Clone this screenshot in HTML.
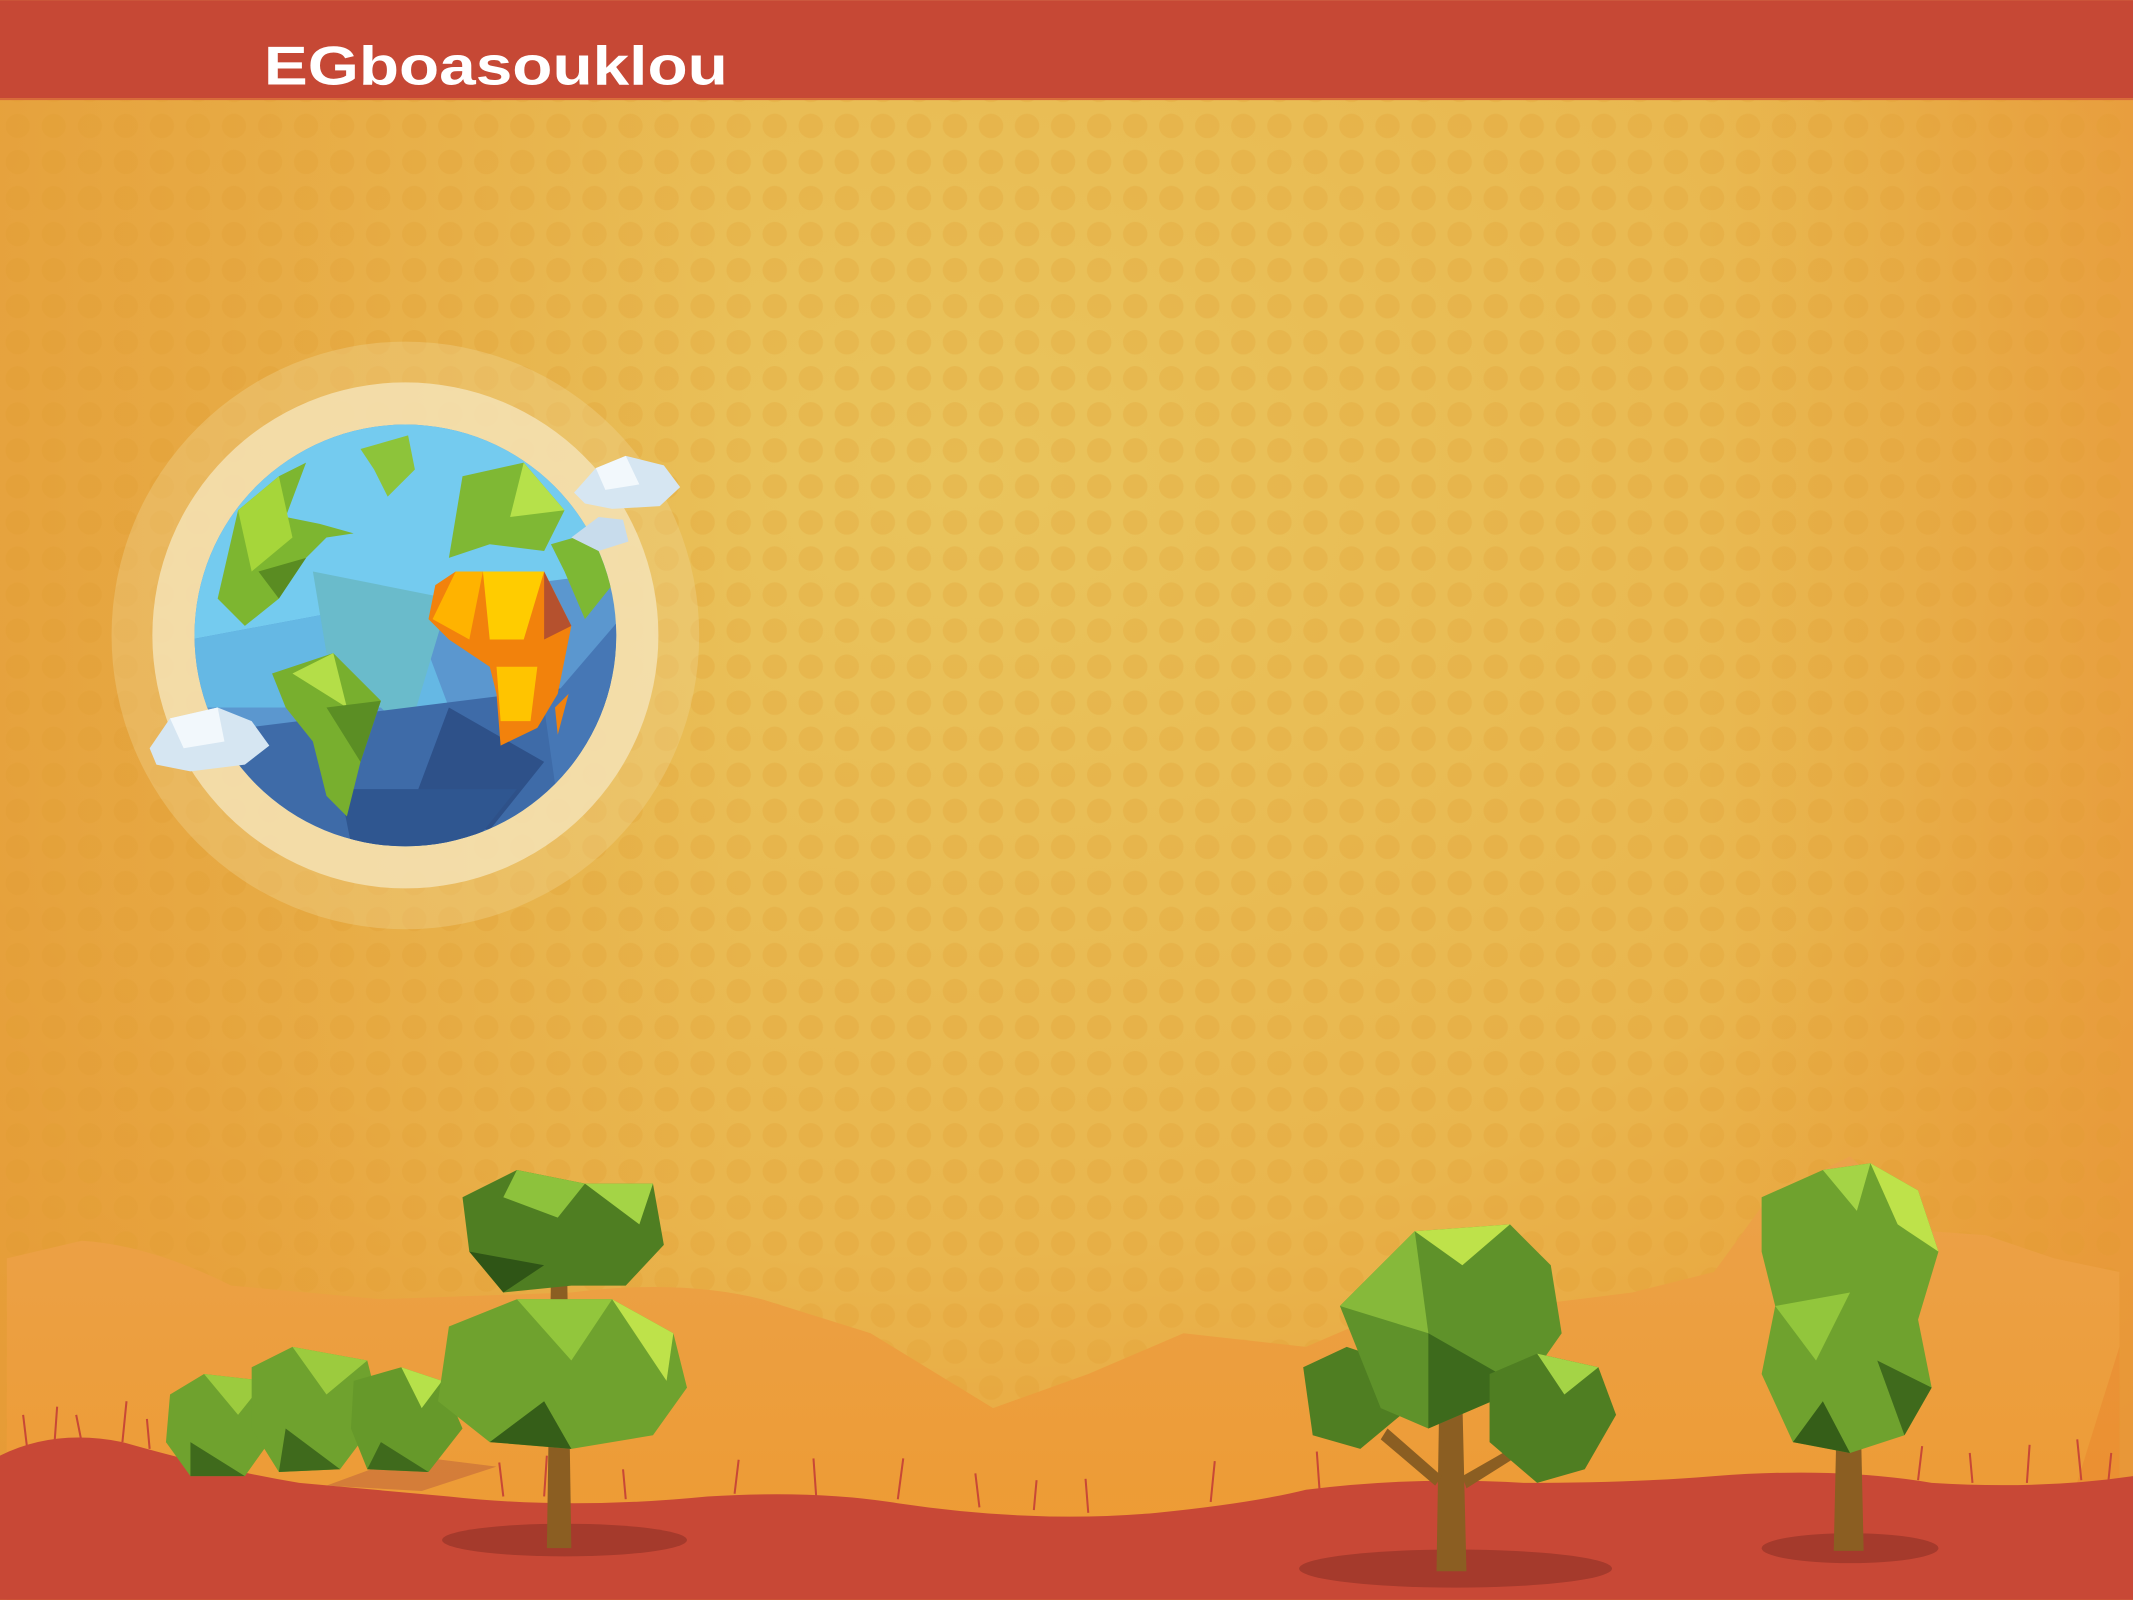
<!DOCTYPE html>
<html><head><meta charset="utf-8"><style>
html,body{margin:0;padding:0;width:2133px;height:1600px;overflow:hidden}
svg{display:block}
.t{font-family:"Liberation Sans",sans-serif;font-weight:bold}
</style></head><body>
<svg width="2133" height="1600" viewBox="0 0 1568 1176" xmlns="http://www.w3.org/2000/svg">
<defs>
<radialGradient id="bg" cx="0.45" cy="0.3" r="0.8">
<stop offset="0" stop-color="#E9C45C"/><stop offset="0.6" stop-color="#E9B64E"/><stop offset="1" stop-color="#E99A34"/>
</radialGradient>
<linearGradient id="bgl" x1="0" y1="0" x2="1" y2="0">
<stop offset="0" stop-color="#E59A36" stop-opacity="0.7"/><stop offset="0.35" stop-color="#E59A36" stop-opacity="0"/><stop offset="0.8" stop-color="#E59A36" stop-opacity="0"/><stop offset="1" stop-color="#E8953A" stop-opacity="0.6"/>
</linearGradient>
<pattern id="dots" width="26.5" height="26.5" patternUnits="userSpaceOnUse">
<circle cx="13" cy="13" r="9" fill="#E09A30" opacity="0.25"/>
</pattern>
<linearGradient id="mtn" x1="0" y1="0" x2="0" y2="1">
<stop offset="0" stop-color="#EBA24A"/><stop offset="1" stop-color="#EE9A30"/>
</linearGradient>
<clipPath id="gc"><circle cx="298" cy="467" r="155"/></clipPath>
</defs>
<rect width="1568" height="1176" fill="url(#bg)"/>
<rect width="1568" height="1176" fill="url(#bgl)"/>
<rect y="72" width="1568" height="1000" fill="url(#dots)"/>
<!-- mountains -->
<path d="M5 925 L60 912 Q110 915 170 945 L280 955 L420 950 Q500 940 560 955 L640 980 L730 1035 L800 1010 L870 980 L960 990 L1030 960 L1120 960 L1200 950 L1260 935 L1300 880 L1360 850 L1420 905 L1460 908 L1510 925 L1558 935 L1558 1176 L5 1176Z" fill="url(#mtn)"/>
<path d="M1500 1176 L1558 990 L1558 1176Z" fill="#E8802A" opacity="0.4"/>
<!-- ring -->
<circle cx="298" cy="467" r="216" fill="#F2D895" opacity="0.35"/>
<circle cx="298" cy="467" r="186" fill="#F5E2B4" opacity="0.85"/>
<!-- globe -->
<g clip-path="url(#gc)">
<rect x="140" y="310" width="320" height="320" fill="#5B97CF"/>
<polygon points="140,310 460,310 460,420 300,440 140,470" fill="#74CBEF"/>
<polygon points="140,470 300,440 330,520 140,520" fill="#65B8E4"/>
<polygon points="230,420 330,440 300,540 240,480" fill="#6ABBCB"/>
<polygon points="140,540 460,500 460,630 140,630" fill="#3E6BA8"/>
<polygon points="330,520 400,560 360,610 300,600" fill="#2E5189"/>
<polygon points="250,580 380,580 340,630 260,630" fill="#2F5690"/>
<polygon points="400,520 460,450 460,560 410,590" fill="#4677B5"/>
<polygon points="160,440 175,375 205,350 225,340 210,380 235,385 260,392 240,395 225,410 205,440 180,460" fill="#7DB630"/>
<polygon points="175,375 205,350 215,395 185,420" fill="#A6D63A"/>
<polygon points="190,420 225,410 205,440" fill="#5A8C22"/>
<polygon points="265,330 300,320 305,345 285,365 275,345" fill="#8DC43A"/>
<polygon points="340,350 385,340 415,375 400,405 360,400 330,410" fill="#7FB834"/>
<polygon points="385,340 415,375 375,380" fill="#B6E14A"/>
<polygon points="405,400 440,390 450,430 430,455 415,420" fill="#7DB834"/>
<polygon points="200,495 245,480 280,515 265,560 255,600 240,585 230,545 210,520" fill="#78AF2E"/>
<polygon points="215,495 245,480 255,520" fill="#B4DE48"/>
<polygon points="240,520 280,515 265,560" fill="#5B8E24"/>
<polygon points="320,430 335,420 400,420 420,460 410,510 395,535 368,548 365,510 360,490 330,470 315,455" fill="#F2820C"/>
<polygon points="355,420 400,420 385,470 360,470" fill="#FFCC00"/>
<polygon points="335,420 355,420 345,470 318,455" fill="#FFB300"/>
<polygon points="365,490 395,490 390,530 368,530" fill="#FFC400"/>
<polygon points="400,420 420,460 400,470" fill="#B5512E"/>
<polygon points="408,520 418,510 410,540" fill="#F2820C"/>
</g>
<!-- clouds -->
<polygon points="422,362 438,344 460,335 488,342 500,358 485,372 450,374 430,370" fill="#D6E6F2"/>
<polygon points="438,344 460,335 470,356 445,360" fill="#F2F8FC"/>
<polygon points="420,395 440,380 458,382 462,398 440,405" fill="#C8DCEC"/>
<polygon points="110,550 125,528 160,520 185,530 198,548 180,562 140,567 115,562" fill="#D6E6F2"/>
<polygon points="125,528 160,520 165,545 135,550" fill="#F2F8FC"/>
<!-- ground -->
<path d="M0 1070 Q40 1050 90 1060 Q160 1080 220 1090 L330 1100 Q420 1110 520 1100 Q600 1095 660 1105 Q760 1120 850 1112 Q920 1105 960 1095 Q1040 1085 1120 1090 Q1200 1090 1260 1085 Q1350 1078 1420 1090 Q1500 1095 1568 1085 L1568 1176 L0 1176Z" fill="#C84836"/>
<g stroke="#C84836" stroke-width="1.5">
<path d="M20 1065 l-3 -25 M40 1062 l2 -28 M60 1060 l-4 -20 M90 1060 l3 -30 M110 1065 l-2 -22 M370 1100 l-3 -25 M400 1100 l2 -30 M460 1102 l-2 -22 M540 1098 l3 -25 M600 1100 l-2 -28 M660 1102 l4 -30 M720 1108 l-3 -25 M760 1110 l2 -22 M800 1112 l-2 -25 M890 1104 l3 -30 M970 1095 l-2 -28 M1410 1088 l3 -25 M1450 1090 l-2 -22 M1490 1090 l2 -28 M1530 1088 l-3 -30 M1550 1088 l2 -20"/>
</g>
<!-- shadows -->
<ellipse cx="415" cy="1132" rx="90" ry="12" fill="#A53A2C"/>
<ellipse cx="1070" cy="1153" rx="115" ry="14" fill="#A53A2C"/>
<ellipse cx="1360" cy="1138" rx="65" ry="11" fill="#A53A2C"/>
<polygon points="240,1092 300,1070 365,1078 310,1096" fill="#C9703A" opacity="0.7"/>
<!-- left bushes -->
<polygon points="125,1025 150,1010 195,1015 205,1050 180,1085 140,1085 122,1060" fill="#6FA22E"/>
<polygon points="150,1010 195,1015 175,1040" fill="#9CCB3E"/>
<polygon points="140,1060 180,1085 140,1085" fill="#3F6A1C"/>
<polygon points="185,1005 215,990 270,1000 280,1040 250,1080 205,1082 185,1050" fill="#6FA22E"/>
<polygon points="215,990 270,1000 240,1025" fill="#9CCB3E"/>
<polygon points="210,1050 250,1080 205,1082" fill="#3F6A1C"/>
<polygon points="260,1015 295,1005 325,1015 340,1050 315,1082 270,1080 258,1050" fill="#66992A"/>
<polygon points="295,1005 325,1015 310,1035" fill="#B6E14A"/>
<polygon points="280,1060 315,1082 270,1080" fill="#3F6A1C"/>
<!-- tree 1 -->
<polygon points="405,940 417,940 420,1138 402,1138" fill="#8B5E22"/>
<polygon points="340,880 380,860 430,870 480,870 488,915 460,945 420,945 370,950 345,920" fill="#4F7E22"/>
<polygon points="380,860 430,870 410,895 370,880" fill="#8DC23C"/>
<polygon points="430,870 480,870 470,900" fill="#A4D446"/>
<polygon points="345,920 370,950 400,930" fill="#2F5516"/>
<polygon points="330,975 380,955 450,955 495,980 505,1020 480,1055 420,1065 360,1060 322,1030" fill="#6FA22E"/>
<polygon points="380,955 450,955 420,1000" fill="#92C63C"/>
<polygon points="450,955 495,980 490,1015" fill="#BEE24A"/>
<polygon points="360,1060 420,1065 400,1030" fill="#355E18"/>
<!-- tree 2 -->
<polygon points="1058,1030 1075,1030 1078,1155 1056,1155" fill="#8B5E22"/>
<polygon points="1020,1050 1060,1085 1055,1092 1015,1058" fill="#8B5E22"/>
<polygon points="1075,1085 1110,1065 1113,1072 1078,1094" fill="#8B5E22"/>
<polygon points="958,1005 990,990 1020,1000 1030,1040 1000,1065 965,1055" fill="#4F7E22"/>
<polygon points="985,960 1040,905 1110,900 1140,930 1148,980 1120,1020 1050,1050 1015,1035" fill="#5F922A"/>
<polygon points="1040,905 1110,900 1075,930" fill="#BEE24A"/>
<polygon points="985,960 1040,905 1050,980" fill="#86B93A"/>
<polygon points="1050,980 1120,1020 1050,1050" fill="#3D6A1C"/>
<polygon points="1095,1010 1130,995 1175,1005 1188,1040 1165,1080 1130,1090 1095,1060" fill="#4F7E22"/>
<polygon points="1130,995 1175,1005 1150,1025" fill="#A4D446"/>
<!-- tree 3 -->
<polygon points="1350,1050 1368,1050 1370,1140 1348,1140" fill="#8B5E22"/>
<polygon points="1295,880 1340,860 1375,855 1410,875 1425,920 1410,970 1420,1020 1400,1055 1360,1068 1318,1060 1295,1010 1305,960 1295,920" fill="#6FA22E"/>
<polygon points="1340,860 1375,855 1365,890" fill="#A4D446"/>
<polygon points="1375,855 1410,875 1425,920 1395,900" fill="#BEE24A"/>
<polygon points="1305,960 1360,950 1335,1000" fill="#92C63C"/>
<polygon points="1318,1060 1360,1068 1340,1030" fill="#355E18"/>
<polygon points="1380,1000 1420,1020 1400,1055" fill="#3F6A1C"/>
<!-- header -->
<rect width="1568" height="72" fill="#C64835"/>
<rect y="72" width="1568" height="1.5" fill="#D86A3A"/>
<text x="194" y="62" class="t" font-size="40" fill="#fff" textLength="341" lengthAdjust="spacingAndGlyphs">EGboasouklou</text>
</svg>
</body></html>
